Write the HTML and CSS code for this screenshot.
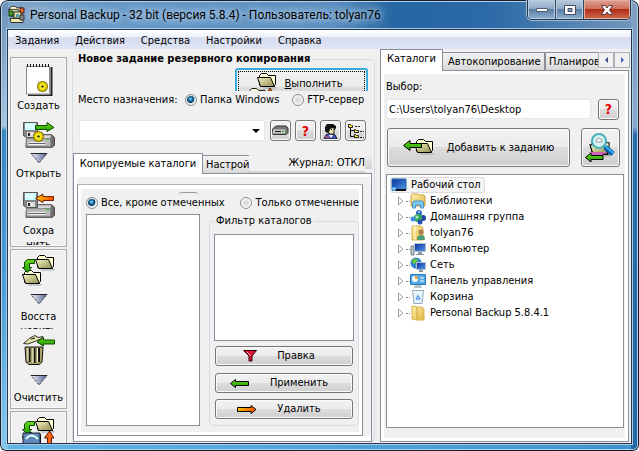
FILE: index.html
```html
<!DOCTYPE html>
<html lang="ru">
<head>
<meta charset="utf-8">
<title>Personal Backup</title>
<link rel="stylesheet" href="styles.css">
</head>
<body>
<svg class="defs" aria-hidden="true">
  <defs>
    <linearGradient id="gTri" x1="0" x2="1"><stop offset="0" stop-color="#eef0fa"/><stop offset="1" stop-color="#56648f"/></linearGradient>
    <linearGradient id="gFold" x1="0" y1="0" x2="1" y2="1"><stop offset="0" stop-color="#f6f6c0"/><stop offset="1" stop-color="#8e8a50"/></linearGradient>
    <linearGradient id="gGreen" x1="0" y1="0" x2="0" y2="1"><stop offset="0" stop-color="#6ada1e"/><stop offset="1" stop-color="#1d9a00"/></linearGradient>
    <linearGradient id="gOrange" x1="0" x2="1"><stop offset="0" stop-color="#ffc400"/><stop offset="1" stop-color="#f04a00"/></linearGradient>
    <linearGradient id="gYel" x1="0" y1="0" x2="1" y2="1"><stop offset="0" stop-color="#fff3b0"/><stop offset="1" stop-color="#dfb53e"/></linearGradient>
    <linearGradient id="gScreen" x1="0" y1="0" x2="1" y2="1"><stop offset="0" stop-color="#0a2f9c"/><stop offset="1" stop-color="#4f9bea"/></linearGradient>
    <symbol id="folder" viewBox="0 0 20 16">
      <path d="M6 15h13v-1" stroke="#98a4a8" fill="none"/>
      <path d="M2.500 12.500V2.500L4.500.5H9.500L11.500 2.500H18.500V11.500L16.500 13.500" fill="#ffffd2" stroke="#000"/>
      <path d="M.5 4.500H13.500L17.500 13.500H3.500Z" fill="url(#gFold)" stroke="#000"/>
    </symbol>
    <symbol id="left" viewBox="0 0 20 9"><path d="M.5 4.500L5.500.5V2.500H18.500V6.500H5.500V8.500Z" fill="url(#gGreen)" stroke="#000"/></symbol>
    <symbol id="gear" viewBox="0 0 10 10"><path d="M4 0h2v1h2v1h1v2h1v2h-1v2h-1v1h-2v1h-2v-1h-2v-1h-1v-2h-1v-2h1v-2h1v-1h2z" fill="#e8cf00" stroke="#6a5c00" stroke-width=".7"/><path d="M3 3h4v4h-4z" fill="#ffff3c"/><path d="M4 4h2v2h-2z" fill="#201c00"/></symbol>
    <symbol id="drive" viewBox="0 0 32 14"><path d="M2 13.500h27l2.500-2V3.500L28.500.5H8L2.500 4.500Z" fill="#6e6e6e" stroke="#444"/><path d="M2.500 4.500L8 1h20l-1 3.500Z" fill="#d6d6d6"/><path d="M2.500 4.500h25v8h-25z" fill="#b9b9b9" stroke="#888"/><path d="M5 8.500h17M5 10.500h17" stroke="#fff"/><path d="M5 9.500h17" stroke="#555"/><path d="M23 5h3v1h-3z" fill="#1fc01f"/></symbol>
    <symbol id="floppy" viewBox="0 0 15 16"><path d="M.5.5h14v15h-11l-3-2z" fill="#858585" stroke="#555"/><path d="M2 1h11v7h-11z" fill="#c5ffff"/><path d="M2 3h11M2 5h9" stroke="#f5ffff"/><path d="M4 10h8v5h-8z" fill="#ddd"/><path d="M5 11h2v3h-2z" fill="#222"/></symbol>
    <symbol id="down" viewBox="0 0 18 11"><path d="M1 .5H17L9 10Z" fill="url(#gTri)" stroke="#111" stroke-dasharray="1 1"/><path d="M1 .5H17" stroke="#222"/></symbol>
    <symbol id="transfer" viewBox="0 0 33 31">
      <use href="#folder" x="13" y="0" width="20" height="16"/><use href="#folder" x="0" y="15" width="20" height="16"/>
      <path d="M12.500 4.500V8.500H7.500V12.500H9.500L5.500 17.500L.5 12.500H2.500V7L5.500 4.500Z" fill="url(#gGreen)" stroke="#0d4a00"/>
    </symbol>
  </defs>
</svg>
<div class="window">
  <header class="titlebar">
    <svg class="app-icon" width="18" height="18" viewBox="0 0 18 18"><use href="#folder" x="0" y="0" width="15" height="12"/><path d="M12 2h4v5h-4z" fill="#e06a20" stroke="#512"/><path d="M1 5h4v5H1z" fill="#3c9d24" stroke="#143c0c"/><path d="M6 6h7v6H6z" fill="#efe9aa" stroke="#333"/><path d="M8 8h3v3H8z" fill="#4f9cb8"/><path d="M2 12.500h13v4H3z" fill="#f0eab0" stroke="#333"/><path d="M12 9h4v5h-4z" fill="#888" stroke="#333"/></svg>
    <h1>Personal Backup - 32 bit (версия 5.8.4) - Пользователь: tolyan76</h1>
    <div class="caption-buttons">
      <button class="cap" aria-label="Свернуть"><svg width="12" height="6"><path d="M.5 1.500h11v3H.5z" fill="#fff" stroke="#555e70"/></svg></button>
      <button class="cap" aria-label="Развернуть"><svg width="12" height="10"><path d="M.5.5h11v9H.5z" fill="#fff" stroke="#454e60"/><path d="M4 3.500h4v3H4z" fill="#7e9bbb" stroke="#454e60"/></svg></button>
      <button class="cap close" aria-label="Закрыть"><svg width="12" height="10"><path d="M.5.5H4L6 3L8 .5H11.500L8.500 5L11.500 9.500H8L6 7L4 9.500H.5L3.500 5Z" fill="#fff" stroke="#59404c"/></svg></button>
    </div>
  </header>
  <div class="client">
    <nav class="menu">
      <a href="#">Задания</a><a href="#">Действия</a><a href="#">Средства</a><a href="#">Настройки</a><a href="#">Справка</a>
    </nav>
    <div class="body">
      <aside class="tools">
        <div class="tool-group">
          <button class="tool new"><svg width="28" height="33" viewBox="0 0 28 33"><path d="M3 32.500h23.500V4" fill="none" stroke="#222" stroke-width="2"/><path d="M1.500 3.500h23v27.500h-23z" fill="#fff" stroke="#8c8c8c"/><path d="M2 2.500h24" stroke="#111" stroke-width="3" stroke-dasharray="1 2"/><use href="#gear" x="12" y="18" width="11" height="11"/></svg><span>Создать</span></button>
          <button class="tool open"><svg width="32" height="27" viewBox="0 0 32 27"><use href="#drive" x="1" y="12" width="31" height="14"/><use href="#floppy" x="0" y="0" width="15" height="16"/><path d="M12.500 3.500H24V.5L31 5.500L24 9.500V7.500H12.500Z" fill="url(#gGreen)" stroke="#0d4a00"/><use href="#gear" x="10" y="9" width="11" height="11"/></svg><svg class="arrow" width="18" height="11"><use href="#down"/></svg><span>Открыть</span></button>
          <button class="tool save"><svg width="32" height="27" viewBox="0 0 32 27"><use href="#drive" x="1" y="12" width="31" height="14"/><use href="#floppy" x="0" y="0" width="15" height="16"/><path d="M30.500 4.500H20V2L12.500 6.500L20 10.500V8.500H30.500Z" fill="url(#gOrange)" stroke="#742000"/></svg><span>Сохра<br>нить</span></button>
        </div>
        <div class="tool-group">
          <button class="tool restore"><svg width="33" height="31"><use href="#transfer" width="33" height="31"/></svg><svg class="arrow" width="18" height="11"><use href="#down"/></svg><span>Восста<br>новить</span></button>
          <button class="tool clean"><svg width="32" height="31" viewBox="0 0 32 31"><path d="M2 12h18l-1 15-3 2.500H6L3 27Z" fill="#a8a46c" stroke="#111"/><path d="M6.500 13v14M11.500 13v15M16 13v14" stroke="#111" stroke-width="2"/><path d="M5 13v13M10 13v15M14.500 13v14" stroke="#ffffd2"/><path d="M.5 8.500L7 3L12 .5L15 2.500L20 1.500L18 4L5 9Z" fill="#e8e5a8" stroke="#333"/><path d="M8 4l4-1" stroke="#111"/><path d="M31.500 5H20.500V2.500L14 7L20.500 11V9H31.500Z" fill="url(#gGreen)" stroke="#0d4a00"/></svg><svg class="arrow" width="18" height="11"><use href="#down"/></svg><span>Очистить</span></button>
        </div>
        <div class="tool-group last">
          <button class="tool sync" aria-label="Обмен"><svg width="33" height="31" viewBox="0 0 33 31"><use href="#transfer" width="33" height="31"/><path d="M1 16h17v15H1z" fill="#5f88b8" stroke="#223"/><path d="M4 22q5-7 12 0" fill="none" stroke="#dff" stroke-width="2"/><path d="M25.500 31V21H22.500L27.500 14L32 21H29.500V31Z" fill="#f8641c" stroke="#611800"/></svg></button>
        </div>
      </aside>

      <main class="job">
        <fieldset class="job-box">
          <legend>Новое задание резервного копирования</legend>
          <div class="run-clip"><button class="btn run"><svg width="33" height="31" viewBox="0 0 33 31"><use href="#folder" x="10" y="1" width="20" height="16"/><use href="#folder" x="0" y="16" width="20" height="15"/><path d="M18 25l5-9 6 9z" fill="#f46a1c" stroke="#611800"/></svg><span><u>В</u>ыполнить</span></button></div>
          <div class="dest">
            <span class="dest-label">Место назначения:</span>
            <label><input type="radio" name="dest" checked>Папка Windows</label>
            <label><input type="radio" name="dest">FTP-сервер</label>
          </div>
          <div class="path-row">
            <select aria-label="Место назначения"><option></option></select>
            <button class="btn small" aria-label="Диск"><svg width="17" height="11" viewBox="0 0 17 11"><path d="M1 9.500h13l2-2V3L14 1H4L.5 4Z" fill="#777" stroke="#333"/><path d="M1 4.500h12v4H1z" fill="#ccc"/><path d="M3 6.500h6" stroke="#111"/><path d="M10 6h2v1h-2z" fill="#0b0"/></svg></button>
            <button class="btn small help" aria-label="Помощь">?</button>
            <button class="btn small" aria-label="Пользователь"><svg width="15" height="16" viewBox="0 0 15 16"><path d="M3 12l4-2 5 2 2 4H1z" fill="#4055c8" stroke="#111"/><path d="M5 4h6v7H7L5 9z" fill="#f5e8b8" stroke="#222"/><path d="M2 8V4L4 1h6l3 2v3l-3-1-3 1-1 3-2 1z" fill="#111"/><path d="M8 6.500h1M11 6.500h1" stroke="#000"/><path d="M6 12l2 3 2-3z" fill="#fff"/><path d="M2 14h4" stroke="#e55"/></svg></button>
            <button class="btn small" aria-label="Дерево"><svg width="17" height="16" viewBox="0 0 17 16"><path d="M3.500 4v9.500h4M3.500 7.500h4" fill="none" stroke="#000"/><path d="M1.500 1.500h2l1 1h1v2h-4zM7.500 6.500h1l1 1h2v2h-4zM7.500 11.500h1l1 1h2v2h-4z" fill="#ffe93b" stroke="#222"/><path d="M8 3.500h6M13 8.500h4M13 14.500h4" stroke="#222" stroke-dasharray="2 1"/></svg></button>
          </div>
          <div class="tabs job-tabs">
            <button class="tab active">Копируемые каталоги</button><button class="tab clipped">Настройки</button><span class="log">Журнал: ОТКЛ</span><i class="tab-end"></i>
          </div>
          <section class="sheet">
            <div class="stripe"></div>
            <div class="inner-sheet">
              <div class="inner">
                <div class="mode">
                  <label><input type="radio" name="mode" checked>Все, кроме отмеченных</label>
                  <label><input type="radio" name="mode">Только отмеченные</label>
                </div>
                <div class="lists">
                  <div class="list"></div>
                  <fieldset class="filter">
                    <legend>Фильтр каталогов</legend>
                    <div class="list filter-list"></div>
                    <div class="filter-buttons">
                      <button class="btn wide edit"><svg width="14" height="12" viewBox="0 0 14 12"><path d="M.5.5h13L9 6v5H6V6Z" fill="#dc1436" stroke="#300"/><path d="M4 2l4 4" stroke="#ffa0b0"/></svg><span>Правка</span></button>
                      <button class="btn wide"><svg width="20" height="9"><use href="#left"/></svg><span>Применить</span></button>
                      <button class="btn wide"><svg width="20" height="9" viewBox="0 0 20 9"><path d="M19 4.500L14 .5V2.500H.5V6.500H14V8.500Z" fill="url(#gOrange)" stroke="#000"/></svg><span>Удалить</span></button>
                    </div>
                  </fieldset>
                </div>
              </div>
            </div>
          </section>
        </fieldset>
      </main>

      <section class="catalog">
        <div class="tabs cat-tabs">
          <button class="tab active">Каталоги</button><button class="tab">Автокопирование</button><button class="tab clipped">Планировщик</button>
          <button class="scroll" aria-label="Назад"><svg width="3" height="6"><path d="M3 0v6L0 3z" fill="#3c4a86"/></svg></button><button class="scroll" aria-label="Вперёд"><svg width="3" height="6"><path d="M0 0v6l3-3z" fill="#4c62b8"/></svg></button>
        </div>
        <div class="cat-sheet">
          <div class="cat-inner">
            <label class="pick" for="path">Выбор:</label>
            <div class="pick-row"><input id="path" type="text" value="C:\Users\tolyan76\Desktop"><button class="btn small help" aria-label="Помощь">?</button></div>
            <div class="add-row">
              <button class="btn add"><svg width="32" height="17" viewBox="0 0 32 17"><use href="#folder" x="11" y="0" width="20" height="16"/><path d="M.5 6.500L7 1.500V4.500H18.500V8.500H7V11.500Z" fill="url(#gGreen)" stroke="#000"/></svg><span><u>Д</u>обавить к заданию</span></button>
              <button class="btn find" aria-label="Найти"><svg width="31" height="30" viewBox="0 0 31 30"><use href="#folder" x="4" y="7" width="22" height="17"/><path d="M4 19h18l-5 3H8z" fill="#cf62b8"/><circle cx="14" cy="8" r="7" fill="#d6f4f4" stroke="#4bb0b8" stroke-width="2"/><path d="M11 9V7l3-2 3 2v2z" fill="#fff" stroke="#999"/><path d="M20 14l8 7" stroke="#085cb0" stroke-width="5"/><path d="M20 13l8 7" stroke="#32b4f4" stroke-width="2"/><path d="M.5 24.500L6 20V22.500H18V26.500H6V29Z" fill="url(#gGreen)" stroke="#000"/></svg></button>
            </div>
            <ul class="tree">
              <li class="root"><span><svg width="16" height="14" viewBox="0 0 16 14"><path d="M1 1h14v11H1z" fill="url(#gScreen)" stroke="#2866a8"/><path d="M1 12h14" stroke="#111" stroke-width="2"/><circle cx="3" cy="11" r="2" fill="#6bc5ff"/></svg>Рабочий стол</span></li>
              <li><svg width="16" height="16" viewBox="0 0 16 16"><path d="M1 3l1-2h6l1 1h5l1 2v9H1z" fill="url(#gYel)" stroke="#c9a143"/><path d="M2.500 15V10q0-2 2-2h7q2 0 2 2v5h-3v-3h-5v3z" fill="#7cc8f0" stroke="#4a94c4"/></svg>Библиотеки</li>
              <li><svg width="16" height="16" viewBox="0 0 16 16"><circle cx="9" cy="4" r="3" fill="#3366cc"/><circle cx="13" cy="9" r="3" fill="#2246a8"/><circle cx="8" cy="9" r="4" fill="#34a853"/><circle cx="7" cy="8" r="1.500" fill="#b0f0c0"/><circle cx="3" cy="10" r="2.500" fill="#3c8fe0"/><circle cx="10" cy="13" r="2.500" fill="#2952b8"/><circle cx="9" cy="3" r="1" fill="#b8d8ff"/></svg>Домашняя группа</li>
              <li><svg width="16" height="16" viewBox="0 0 16 16"><path d="M2 1h9l2 2v12H2z" fill="url(#gYel)" stroke="#d6ae48"/><path d="M5 1v14" stroke="#fff7cc"/><circle cx="11" cy="7" r="2.500" fill="#b07b50"/><path d="M7 15q0-5 4-5t4 5z" fill="#4f9c78"/></svg>tolyan76</li>
              <li><svg width="16" height="16" viewBox="0 0 16 16"><path d="M1 5h3v9H1z" fill="#bcc4ca" stroke="#78828a"/><path d="M4.500 2.500h11v8h-11z" fill="url(#gScreen)" stroke="#b6bec8"/><path d="M8 11h4v2h2v1H6v-1h2z" fill="#8a949c"/></svg>Компьютер</li>
              <li><svg width="16" height="16" viewBox="0 0 16 16"><circle cx="6" cy="6" r="5.500" fill="#2c80d4"/><path d="M2 3q4-3 6 0L6 6 3 7zM5 8l4 1-2 3z" fill="#67c63c"/><path d="M6.500 5.500h9v7h-9z" fill="url(#gScreen)" stroke="#b6bec8"/><path d="M9 13h4v2H9z" fill="#8a949c"/></svg>Сеть</li>
              <li><svg width="16" height="16" viewBox="0 0 16 16"><path d="M.5 1.500h15v10H.5z" fill="#54a8e4" stroke="#2d78b8"/><circle cx="5" cy="6" r="3" fill="#fff"/><path d="M5 3v3h3a3 3 0 0 0-3-3z" fill="#f29a2c"/><path d="M10 5h4M10 8h4" stroke="#fff"/><path d="M5 12h6l1 3H4z" fill="#b8c4cc"/></svg>Панель управления</li>
              <li><svg width="16" height="16" viewBox="0 0 16 16"><path d="M2.500 1.500h11L12 14.500H4z" fill="#e4f2fb" stroke="#8fa9bc"/><path d="M3 3h10" stroke="#fff"/><path d="M6 10l2-3.500 2 3.500z" fill="none" stroke="#2f80d8"/></svg>Корзина</li>
              <li><svg width="16" height="16" viewBox="0 0 16 16"><path d="M2 1l5 1v13l-5-1zM7 2h5l2 2v11H7z" fill="url(#gYel)" stroke="#d9b24c"/></svg>Personal Backup 5.8.4.1</li>
            </ul>
          </div>
        </div>
      </section>
    </div>
  </div>
</div>
</body>
</html>
```

FILE: styles.css
```css
* { box-sizing: border-box; }
body {
  margin: 0;
  background: #fff;
  color: #000;
  font: 11px/14px "DejaVu Sans Condensed", "DejaVu Sans", sans-serif;
}
button, input, select { font: inherit; color: inherit; margin: 0; }
button { padding: 0; border: 0; background: none; white-space: nowrap; }
svg { display: block; flex: none; }
.defs { position: absolute; width: 0; height: 0; }
fieldset { margin: 0; padding: 0; min-width: 0; border: 1px solid #d3dce4; border-radius: 4px; }

.window {
  height: 100vh;
  display: flex;
  flex-direction: column;
  padding: 0 8px 8px;
  border-radius: 8px 8px 6px 6px;
  overflow: hidden;
  box-shadow: inset 0 0 0 1px #17202a, inset 0 0 0 2px #b5d2ec;
  background:
    linear-gradient(#6b8fb8, #a8c8e0 28%, #3888c0 29%, #4ba0d8 65%, #86c8f0) left / 8px 100% no-repeat,
    linear-gradient(#7c9cc0, #87a9c9 28%, #2b6aaa 30%, #2468a6) right / 8px 100% no-repeat,
    linear-gradient(90deg, #64b4e6, #3e94d0) bottom / 100% 8px no-repeat,
    linear-gradient(90deg, #86a8c8, #6799c8 15%, #5c8fc0 52%, #2465a2 62%, #2e6ba8 78%, #7798bb);
}
.titlebar { height: 30px; flex: none; display: flex; align-items: flex-start; gap: 4px; }
.app-icon { margin-top: 6px; }
.titlebar h1 {
  flex: 1;
  min-width: 0;
  margin: 6px 0 0;
  font: 12px/18px Roboto, "Noto Sans", sans-serif;
  white-space: nowrap;
  text-shadow: 0 0 6px #cfe2f3, 0 0 10px #cfe2f3;
}
.caption-buttons { display: flex; height: 20px; border: 1px solid #26384e; border-top: 0; border-radius: 0 0 5px 5px; overflow: hidden; box-shadow: 0 0 1px 1px #a5bdd6; }
.cap { width: 28px; display: grid; place-items: center; border-right: 1px solid #33465c; background: linear-gradient(#b9cbdd, #8ea9c5 48%, #5b7fa5 50%, #8fb2d3); box-shadow: inset 0 0 0 1px #b9cde0; }
.cap.close { width: 46px; border-right: 0; background: linear-gradient(#e0a292, #cd6b58 48%, #b02d18 50%, #cf6c4c); box-shadow: inset 0 0 0 1px #e4aea2; }

.client { flex: 1; min-height: 0; display: flex; flex-direction: column; background: #f0f0f0; box-shadow: 0 0 0 1px #24374e, 0 0 0 2px #a8cce8; }
.menu { height: 19px; flex: none; display: flex; gap: 16px; padding: 4px 7px 0; background: linear-gradient(#fff, #eff2fa 35%, #d6dcee 40%, #dee4f4); }
.menu a { color: #000; text-decoration: none; }
.body { flex: 1; min-height: 0; display: flex; }

.tools { width: 59px; flex: none; padding: 8px 0 0 2px; overflow: hidden; display: flex; flex-direction: column; gap: 2px; }
.tool-group { flex: none; padding: 5px 0 2px; border: 1px solid #aaa; box-shadow: inset 0 0 0 1px #f8f8f8; height: 190px; overflow: hidden; }
.tool-group + .tool-group { height: 160px; }
.tool { display: flex; flex-direction: column; align-items: center; width: 100%; overflow: hidden; }
.tool span { margin-top: 3px; overflow: hidden; }
.tool .arrow { margin-top: 4px; }
.tool.open { margin-top: 8px; height: 62px; }
.tool.save { margin-top: 8px; height: 53px; }
.tool.save span { margin-top: 5px; }
.tool.new { height: 51px; }
.tool.restore { height: 74px; }
.tool.restore .arrow { margin-top: 8px; }
.tool.restore span, .tool.clean span { margin-top: 5px; }
.tool.clean { margin-top: 6px; height: 70px; }
.tool.clean .arrow { margin-top: 9px; }

.job { flex: 1; min-width: 0; padding: 3px 5px 1px; display: flex; }
.job-box { flex: 1; padding: 0; }
.job-box > legend { margin-left: 5px; padding: 0 2px 0 0; font-weight: bold; }
.btn {
  display: flex; align-items: center; justify-content: center;
  border: 1px solid #777; border-radius: 3px;
  background: linear-gradient(#f3f3f3, #ebebeb 48%, #dddddd 50%, #cfcfcf);
  box-shadow: inset 0 0 0 1px #fafafa;
}
.run-clip { height: 23px; margin: 2px 6px 0 0; overflow: hidden; display: flex; justify-content: flex-end; }
.run { width: 133px; height: 38px; gap: 5px; border: 2px solid #3aaad8; outline: 1px dotted #000; outline-offset: -4px; align-items: flex-start; padding: 2px 14px 0 0; }
.run span { margin-top: 5px; }
.dest { height: 18px; display: flex; align-items: center; padding-left: 5px; white-space: nowrap; }
.dest-label { width: 107px; }
.dest label + label { margin-left: 13px; }
label { display: flex; align-items: center; gap: 3px; white-space: nowrap; }
input[type="radio"] {
  appearance: none; flex: none; width: 12px; height: 12px; border: 1px solid #8a8f94; border-radius: 50%;
  background: radial-gradient(circle, #d0d3d6, #f4f4f4 70%); box-shadow: inset 0 0 0 1px #f8f8f8;
}
input[type="radio"]:checked { background: radial-gradient(circle at 45% 40%, #8fe0ff, #1e7cb0 22%, #0b3558 44%, #dce6ec 52%); }
.path-row { display: flex; gap: 4px; margin: 11px 8px 12px 6px; height: 21px; }
.path-row select {
  appearance: none; flex: 1; min-width: 0; margin-right: 1px; border: 1px solid #e4e6ea; border-radius: 2px;
  background: url("data:image/svg+xml,%3Csvg xmlns='http://www.w3.org/2000/svg' width='8' height='4'%3E%3Cpath d='M0 0h8L4 4z'/%3E%3C/svg%3E") right 4px center no-repeat #fff;
}
.small { width: 21px; height: 21px; flex: none; }
.help { color: #e80000; font: bold 14px/18px "DejaVu Sans Condensed", sans-serif; }

.tabs { display: flex; align-items: flex-end; position: relative; z-index: 1; }
.tab { height: 18px; padding: 0 5px; border: 1px solid #8b8e98; border-bottom: 0; background: linear-gradient(#f2f2f2, #e8e8e8 50%, #d8d8d8); flex: none; }
.tab.active { height: 21px; margin-bottom: -1px; background: #fff; }
.job-tabs { height: 20px; }
.job-tabs .active { width: 130px; }
.job-tabs .clipped { width: 46px; padding: 0 0 0 3px; overflow: hidden; text-align: left; border-right: 0; border-left: 0; }
.log { flex: 1; text-align: right; height: 18px; line-height: 15px; border-bottom: 2px solid #d2d2d2; }
.tab-end { width: 7px; height: 14px; margin: 0 2px 4px 0; background: linear-gradient(#eee, #d2d2d2); }
.sheet { flex: 1; border: 1px solid #8b8e98; background: #fff; margin-right: 2px; padding: 3px 1px 5px 3px; }
.stripe { height: 7px; background: #f0f0f0; }
.inner-sheet { margin-right: 7px; border: 1px solid #8b8e98; border-top-color: #b4b4b4; background: #fff; padding: 4px 3px 3px; box-shadow: 8px 0 0 #f0f0f0; }
.inner { background: #f0f0f0; padding: 6px 0 6px 5px; position: relative; }
.inner::before { content: ""; position: absolute; left: 98px; top: 3px; width: 19px; height: 4px; border-top: 1px solid #999; border-radius: 3px 3px 0 0; }
.mode { display: flex; justify-content: space-between; height: 16px; }
.lists { display: flex; gap: 9px; margin-top: 3px; }
.list { width: 114px; flex: none; height: 212px; border: 1px solid #8b8e98; background: #fff; }
.filter { flex: 1; }
.filter > legend { margin-left: 5px; padding: 0 2px 0 1px; }
.filter-list { width: auto; height: 107px; margin: 6px 4px 5px; }
.filter-buttons { display: flex; flex-direction: column; gap: 6px; margin: 0 5px 6px; }
.wide { height: 20px; gap: 20px; padding-right: 10px; }
.wide.edit { margin-bottom: 1px; }

.catalog { width: 251px; flex: none; display: flex; flex-direction: column; padding-bottom: 1px; }
.cat-tabs { height: 21px; flex: none; padding-right: 1px; }
.cat-tabs .active { width: 63px; height: 22px; padding-bottom: 4px; }
.cat-tabs .tab:nth-child(2) { width: 102px; border-left: 0; }
.cat-tabs .clipped { flex: 1; min-width: 0; padding: 0 0 0 3px; overflow: hidden; border-right: 0; text-align: left; }
.scroll { width: 16px; height: 16px; flex: none; align-self: flex-start; margin-top: 3px; display: grid; place-items: center; border: 1px solid #aeb0b8; background: #f0f0f0; }
.cat-sheet { flex: 1; min-height: 0; display: flex; border: 1px solid #8b8e98; background: #fff; padding: 3px; margin-right: 2px; }
.cat-inner { flex: 1; min-width: 0; display: flex; flex-direction: column; background: #f0f0f0; padding: 6px 1px 10px 2px; }
.pick { height: 14px; }
.pick-row { display: flex; align-items: center; gap: 7px; margin: 5px 5px 0 0; height: 20px; }
.pick-row input { flex: 1; min-width: 0; height: 20px; border: 1px solid #e3e6ea; border-radius: 2px; padding: 0 2px; background: #fff; }
.add-row { display: flex; gap: 11px; margin: 9px 4px 7px 1px; height: 39px; }
.add { flex: 1; gap: 12px; }
.find { width: 39px; }
.tree { flex: 1; margin: 0; padding: 2px 0 0 3px; list-style: none; border: 1px solid #8b8e98; background: #fff; }
.tree li { display: flex; align-items: center; gap: 4px; height: 16px; padding-left: 20px; position: relative; }
.tree li.root { padding-left: 0; }
.root span { display: flex; align-items: center; gap: 4px; height: 16px; padding-right: 3px; border: 1px solid #dcdcdc; border-radius: 2px; background: #f4f4f4; }
.tree li:not(.root)::before {
  content: ""; position: absolute; left: 8px; top: 3px; width: 6px; height: 10px;
  background: url("data:image/svg+xml,%3Csvg xmlns='http://www.w3.org/2000/svg' width='6' height='10'%3E%3Cpath d='M.5 1v8L5 5z' fill='%23fff' stroke='%23a0a0a0'/%3E%3C/svg%3E") no-repeat;
}
.tree li:not(.root)::after { content: ""; position: absolute; left: 16px; top: 8px; width: 4px; border-top: 1px dotted #888; }
```
